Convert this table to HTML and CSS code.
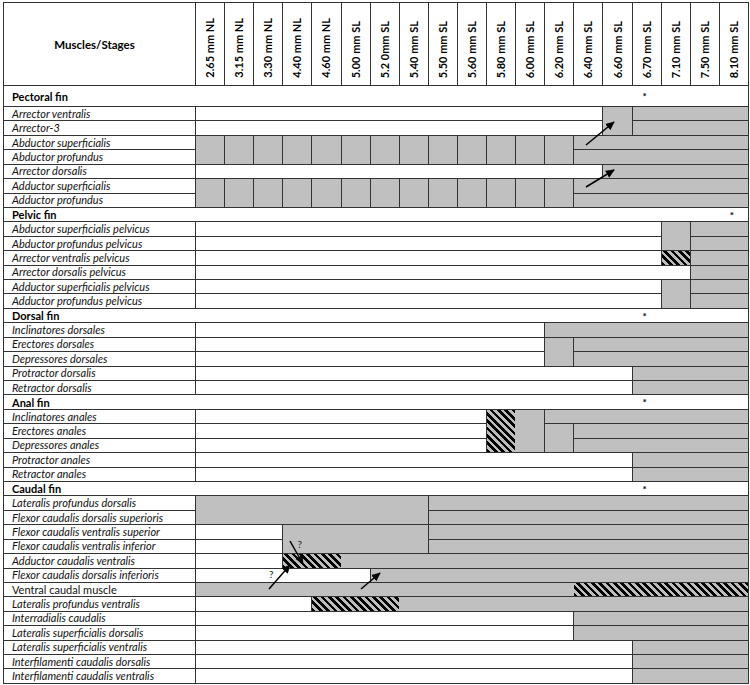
FILE: index.html
```html
<!DOCTYPE html>
<html lang="en">
<head>
<meta charset="utf-8">
<title>Muscles / Stages</title>
<link rel="stylesheet" href="styles.css">
</head>
<body>
<div class="chart">
  <div class="hd-label">Muscles/Stages</div>
  <div class="hd"><span>2.65 mm NL</span></div>
  <div class="hd"><span>3.15 mm NL</span></div>
  <div class="hd"><span>3.30 mm NL</span></div>
  <div class="hd"><span>4.40 mm NL</span></div>
  <div class="hd"><span>4.60 mm NL</span></div>
  <div class="hd"><span>5.00 mm SL</span></div>
  <div class="hd"><span>5.2 0mm SL</span></div>
  <div class="hd"><span>5.40 mm SL</span></div>
  <div class="hd"><span>5.50 mm SL</span></div>
  <div class="hd"><span>5.60 mm SL</span></div>
  <div class="hd"><span>5.80 mm SL</span></div>
  <div class="hd"><span>6.00 mm SL</span></div>
  <div class="hd"><span>6.20 mm SL</span></div>
  <div class="hd"><span>6.40 mm SL</span></div>
  <div class="hd"><span>6.60 mm SL</span></div>
  <div class="hd"><span>6.70 mm SL</span></div>
  <div class="hd"><span>7.10 mm SL</span></div>
  <div class="hd"><span>7.50 mm SL</span></div>
  <div class="hd"><span>8.10 mm SL</span></div>

  <!-- Pectoral fin -->
  <div class="sec"><span class="sec-name">Pectoral fin</span><span class="star st15">*</span></div>
  <div class="lab">Arrector ventralis</div><div class="w c14"></div><div class="g r2"></div><div class="g c4"></div>
  <div class="lab">Arrector-3</div><div class="w c14"></div><div class="g c4"></div>
  <div class="lab">Abductor superficialis</div>
  <div class="g r2"></div><div class="g r2"></div><div class="g r2"></div><div class="g r2"></div><div class="g r2"></div><div class="g r2"></div><div class="g r2"></div><div class="g r2"></div><div class="g r2"></div><div class="g r2"></div><div class="g r2"></div><div class="g r2"></div><div class="g r2"></div>
  <div class="g c6"></div>
  <div class="lab">Abductor profundus</div><div class="g c6"></div>
  <div class="lab">Arrector dorsalis</div><div class="w c14"></div><div class="g c5"></div>
  <div class="lab">Adductor superficialis</div>
  <div class="g r2"></div><div class="g r2"></div><div class="g r2"></div><div class="g r2"></div><div class="g r2"></div><div class="g r2"></div><div class="g r2"></div><div class="g r2"></div><div class="g r2"></div><div class="g r2"></div><div class="g r2"></div><div class="g r2"></div><div class="g r2"></div>
  <div class="g c6"></div>
  <div class="lab">Adductor profundus</div><div class="g c6"></div>

  <!-- Pelvic fin -->
  <div class="sec"><span class="sec-name">Pelvic fin</span><span class="star st18">*</span></div>
  <div class="lab">Abductor superficialis pelvicus</div><div class="w c16"></div><div class="g r2"></div><div class="g c2"></div>
  <div class="lab">Abductor profundus pelvicus</div><div class="w c16"></div><div class="g c2"></div>
  <div class="lab">Arrector ventralis pelvicus</div><div class="w c16"></div><div class="h"></div><div class="g c2"></div>
  <div class="lab">Arrector dorsalis pelvicus</div><div class="w c17"></div><div class="g c2"></div>
  <div class="lab">Adductor superficialis pelvicus</div><div class="w c16"></div><div class="g r2"></div><div class="g c2"></div>
  <div class="lab">Adductor profundus pelvicus</div><div class="w c16"></div><div class="g c2"></div>

  <!-- Dorsal fin -->
  <div class="sec"><span class="sec-name">Dorsal fin</span><span class="star st15">*</span></div>
  <div class="lab">Inclinatores dorsales</div><div class="w c12"></div><div class="g c7"></div>
  <div class="lab">Erectores dorsales</div><div class="w c12"></div><div class="g r2"></div><div class="g c6"></div>
  <div class="lab">Depressores dorsales</div><div class="w c12"></div><div class="g c6"></div>
  <div class="lab">Protractor dorsalis</div><div class="w c15"></div><div class="g c4"></div>
  <div class="lab">Retractor dorsalis</div><div class="w c15"></div><div class="g c4"></div>

  <!-- Anal fin -->
  <div class="sec"><span class="sec-name">Anal fin</span><span class="star st15">*</span></div>
  <div class="lab">Inclinatores anales</div><div class="w c10"></div><div class="mix c2 r3"><div class="hz"></div></div><div class="g c7"></div>
  <div class="lab">Erectores anales</div><div class="w c10"></div><div class="g r2"></div><div class="g c6"></div>
  <div class="lab">Depressores anales</div><div class="w c10"></div><div class="g c6"></div>
  <div class="lab">Protractor anales</div><div class="w c15"></div><div class="g c4"></div>
  <div class="lab">Retractor anales</div><div class="w c15"></div><div class="g c4"></div>

  <!-- Caudal fin -->
  <div class="sec"><span class="sec-name">Caudal fin</span><span class="star st15">*</span></div>
  <div class="lab">Lateralis profundus dorsalis</div><div class="g c8 r2"></div><div class="g c11"></div>
  <div class="lab">Flexor caudalis dorsalis superioris</div><div class="g c11"></div>
  <div class="lab">Flexor caudalis ventralis superior</div><div class="w c3"></div><div class="g c5 r2"></div><div class="g c11"></div>
  <div class="lab">Flexor caudalis ventralis inferior</div><div class="w c3"></div><div class="g c11"></div>
  <div class="lab">Adductor caudalis ventralis</div><div class="w c3"></div><div class="mix c16"><div class="hz c2"></div></div>
  <div class="lab">Flexor caudalis dorsalis inferioris</div><div class="w c6"></div><div class="g c13"></div>
  <div class="lab up">Ventral caudal muscle</div><div class="mix c19"><div class="hz from14"></div></div>
  <div class="lab">Lateralis profundus ventralis</div><div class="w c4"></div><div class="mix c15"><div class="hz c3"></div></div>
  <div class="lab">Interradialis caudalis</div><div class="w c13"></div><div class="g c6"></div>
  <div class="lab">Lateralis superficialis dorsalis</div><div class="w c13"></div><div class="g c6"></div>
  <div class="lab">Lateralis superficialis ventralis</div><div class="w c15"></div><div class="g c4"></div>
  <div class="lab">Interfilamenti caudalis dorsalis</div><div class="w c15"></div><div class="g c4"></div>
  <div class="lab">Interfilamenti caudalis ventralis</div><div class="w c15"></div><div class="g c4"></div>
</div>

<svg class="marks" width="750" height="685" viewBox="0 0 750 685" aria-hidden="true">
  <defs>
    <marker id="ah" viewBox="0 0 10 10" refX="9" refY="5" markerWidth="6" markerHeight="6" orient="auto">
      <path d="M0 0.5 L10 5 L0 9.5 z" fill="#000"/>
    </marker>
  </defs>
  <g stroke="#000" stroke-width="1.5" marker-end="url(#ah)">
    <line x1="586" y1="145" x2="614" y2="122"/>
    <line x1="586" y1="187" x2="614" y2="170"/>
    <line x1="290" y1="541" x2="303" y2="564"/>
    <line x1="269" y1="589" x2="290" y2="565"/>
    <line x1="361" y1="589" x2="380" y2="573"/>
  </g>
  <text x="297.5" y="547.5" class="q">?</text>
  <text x="269" y="577.5" class="q">?</text>
</svg>
</body>
</html>
```
FILE: styles.css
```css
html, body {
  margin: 0;
  padding: 0;
  background: #fff;
}

body {
  font-family: Lato, "Open Sans", sans-serif;
  color: #000;
}

.chart {
  display: grid;
  grid-template-columns: 191px repeat(19, 1fr);
  grid-template-rows: 82px 20px repeat(40, 13.43px);
  gap: 1px;
  padding: 1px;
  width: 746px;
  box-sizing: border-box;
  margin: 2px 0 0 3px;
  background: #333;
}

.hd-label {
  background: #fff;
  display: flex;
  align-items: center;
  justify-content: center;
  font-weight: 700;
  font-size: 11.5px;
  padding-right: 10px;
}

.hd {
  background: #fff;
  display: flex;
  flex-direction: column;
  align-items: center;
  justify-content: flex-end;
  padding-bottom: 7px;
}

.hd span {
  writing-mode: vertical-rl;
  transform: rotate(180deg);
  font-weight: 700;
  font-size: 11px;
  white-space: nowrap;
  line-height: 12px;
}

.sec {
  grid-column: 1 / -1;
  display: grid;
  grid-template-columns: subgrid;
  background: #fff;
  align-items: center;
}

.sec-name {
  grid-column: 1;
  font-weight: 700;
  font-size: 11px;
  padding-left: 8px;
  white-space: nowrap;
}

.star {
  font-size: 10px;
  font-weight: 700;
  text-align: center;
  line-height: 10px;
  padding-right: 4px;
}

.st15 { grid-column: 17; }
.st18 { grid-column: 20; }

.lab {
  background: #fff;
  display: flex;
  align-items: center;
  padding-left: 8px;
  font-style: italic;
  font-size: 11px;
  white-space: nowrap;
  line-height: 12px;
  color: #111;
}

.lab.up { font-style: normal; }

.w { background: #fff; }
.g { background: #c0c0c0; }

.h,
.hz {
  background: repeating-linear-gradient(45deg, #000 0 2.6px, #bdbdbd 2.6px 5.2px);
}

.mix {
  display: grid;
  grid-template-columns: subgrid;
  background: #c0c0c0;
}

.from14 { grid-column: 14 / -1; }

.c2 { grid-column: span 2; }
.c3 { grid-column: span 3; }
.c4 { grid-column: span 4; }
.c5 { grid-column: span 5; }
.c6 { grid-column: span 6; }
.c7 { grid-column: span 7; }
.c8 { grid-column: span 8; }
.c10 { grid-column: span 10; }
.c11 { grid-column: span 11; }
.c12 { grid-column: span 12; }
.c13 { grid-column: span 13; }
.c14 { grid-column: span 14; }
.c15 { grid-column: span 15; }
.c16 { grid-column: span 16; }
.c17 { grid-column: span 17; }
.c19 { grid-column: span 19; }

.r2 { grid-row: span 2; }
.r3 { grid-row: span 3; }

.marks {
  position: absolute;
  top: 0;
  left: 0;
  pointer-events: none;
}

.q {
  font-family: Lato, sans-serif;
  font-size: 10px;
  fill: #222;
}
```
